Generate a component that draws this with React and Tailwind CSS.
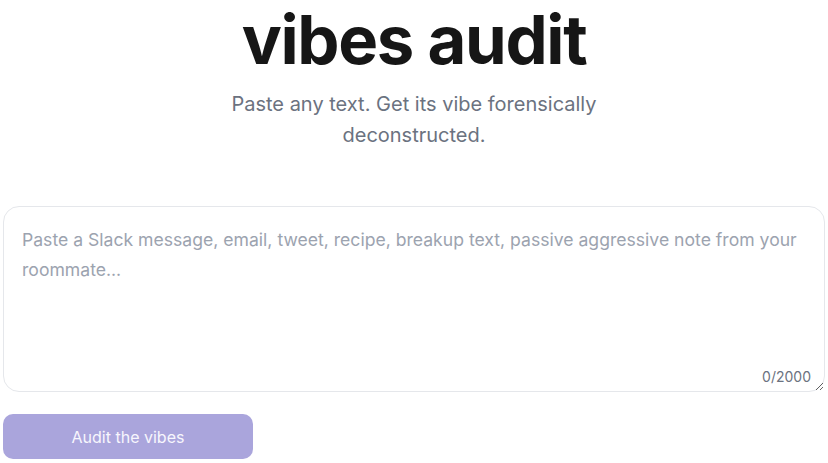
import React, { useState } from "react";

const App = () => {
  const [text, setText] = useState("");

  return (
    <div
      className="min-h-screen bg-white px-[3px]"
      style={{ fontFamily: "Inter, 'Noto Sans', sans-serif" }}
    >
      <h1 className="text-center text-[67px] font-bold leading-[80px] tracking-[-0.02em] text-[#161616]">
        vibes audit
      </h1>
      <p className="mx-auto mt-[9px] max-w-[420px] text-center text-[20px] leading-[31px] text-[#6b7280]">
        Paste any text. Get its vibe forensically deconstructed.
      </p>

      <div className="relative mt-[55px]">
        <textarea
          value={text}
          onChange={(e) => setText(e.target.value)}
          maxLength={2000}
          placeholder="Paste a Slack message, email, tweet, recipe, breakup text, passive aggressive note from your roommate..."
          className="block h-[186px] w-full resize-y rounded-2xl border border-[#e5e7eb] px-[18px] py-[18px] text-[17.6px] leading-[30px] text-[#1f2937] outline-none placeholder:text-[#9ca3af]"
        />
        <span className="absolute bottom-[5px] right-[14px] text-[14px] text-[#6b7280]">
          {text.length}/2000
        </span>
      </div>

      <button
        type="button"
        className="mt-[22px] h-[45px] w-[250px] rounded-[10px] bg-[#aaa5dc] text-[16px] text-[#f7f6fd]"
      >
        Audit the vibes
      </button>
    </div>
  );
};

export default App;
